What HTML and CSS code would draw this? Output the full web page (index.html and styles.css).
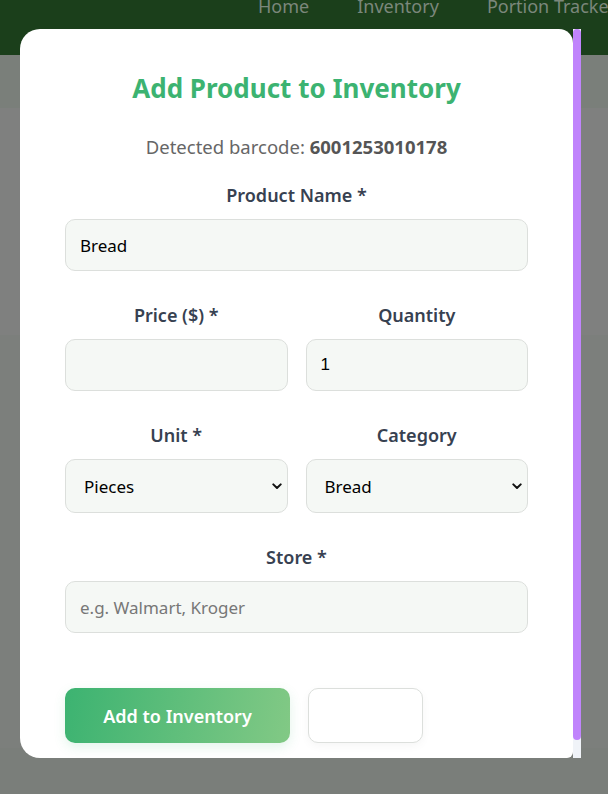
FILE: index.html
```html
<!DOCTYPE html>
<html lang="en">
<head>
<meta charset="utf-8">
<title>Add Product</title>
<link rel="stylesheet" href="styles.css">
</head>
<body>
<div class="page">
  <nav class="nav">
    <ul class="nav-links">
      <li>Home</li>
      <li>Inventory</li>
      <li>Portion Tracker</li>
      <li>Recipes</li>
    </ul>
  </nav>
  <div class="band band-sub"></div>
  <div class="band band-a"></div>
  <div class="band band-b"></div>
  <div class="band band-foot"></div>
</div>

<div class="modal">
  <div class="modal-panel">
    <div class="modal-body">
      <h2 class="modal-title">Add Product to Inventory</h2>
      <p class="barcode">Detected barcode: <strong>6001253010178</strong></p>
      <form class="form">
        <div class="group">
          <label class="label">Product Name *</label>
          <input class="field" type="text" value="Bread">
        </div>
        <div class="row">
          <div class="group">
            <label class="label">Price ($) *</label>
            <input class="field" type="text" value="">
          </div>
          <div class="group">
            <label class="label">Quantity</label>
            <input class="field field-num" type="text" value="1">
          </div>
        </div>
        <div class="row">
          <div class="group">
            <label class="label">Unit *</label>
            <div class="select-wrap">
              <select class="field select"><option>Pieces</option></select>
              <svg class="chev" width="10" height="7" viewBox="0 0 10 7"><path d="M1.3 1.4 L5 5 L8.7 1.4" fill="none" stroke="#111" stroke-width="2" stroke-linecap="round" stroke-linejoin="round"/></svg>
            </div>
          </div>
          <div class="group">
            <label class="label">Category</label>
            <div class="select-wrap">
              <select class="field select"><option>Bread</option></select>
              <svg class="chev" width="10" height="7" viewBox="0 0 10 7"><path d="M1.3 1.4 L5 5 L8.7 1.4" fill="none" stroke="#111" stroke-width="2" stroke-linecap="round" stroke-linejoin="round"/></svg>
            </div>
          </div>
        </div>
        <div class="group">
          <label class="label">Store *</label>
          <input class="field" type="text" placeholder="e.g. Walmart, Kroger">
        </div>
        <div class="actions">
          <button type="button" class="btn btn-primary">Add to Inventory</button>
          <button type="button" class="btn btn-secondary">Cancel</button>
        </div>
      </form>
    </div>
  </div>
  <div class="scrollbar">
    <div class="scroll-thumb"></div>
  </div>
</div>
</body>
</html>
```

FILE: styles.css
```css
* { box-sizing: border-box; }
html, body { margin: 0; padding: 0; }
body {
  width: 608px;
  height: 794px;
  overflow: hidden;
  font-family: "Noto Sans", "Open Sans", sans-serif;
}
.page { display: flex; flex-direction: column; height: 794px; }
.nav {
  height: 55px;
  background: #1b3f1b;
  overflow: hidden;
}
.nav-links {
  list-style: none;
  margin: -6px 0 0 0;
  padding: 0 0 0 258px;
  display: flex;
  gap: 48px;
  white-space: nowrap;
  font-size: 18px;
  line-height: 24px;
  color: #7b877b;
}
.band { flex: none; }
.band-sub { height: 53px; background: #7a7f7a; }
.band-a { height: 227px; background: #7f807f; }
.band-b { height: 413px; background: #7c7f7c; }
.band-foot { flex: 1; background: #7a7e7a; }

.modal {
  position: absolute;
  top: 29px;
  left: 20px;
  width: 561px;
  height: 729px;
  display: flex;
}
.modal-panel {
  flex: 1;
  background: #fff;
  border-radius: 20px 14px 6px 20px;
  overflow: hidden;
}
.scrollbar {
  width: 8px;
  flex: none;
  background: #f0f3f8;
  display: flex;
  flex-direction: column;
}
.scroll-thumb {
  height: 711px;
  background: #c084fc;
  border-radius: 4px;
}

.modal-body {
  padding: 42px 45px 33px 45px;
  text-align: center;
}
.modal-title {
  margin: 0;
  font-size: 26px;
  line-height: 34px;
  font-weight: 700;
  color: #3cb371;
}
.barcode {
  margin: 30px 0 0 0;
  font-size: 18.5px;
  line-height: 24px;
  color: #666;
}
.barcode strong { color: #555; font-weight: 700; }

.form { display: flex; flex-direction: column; gap: 32px; margin-top: 24px; }
.row { display: grid; grid-template-columns: 1fr 1fr; gap: 18px; }
.group { display: flex; flex-direction: column; gap: 12px; }
.label {
  font-size: 18px;
  line-height: 24px;
  font-weight: 600;
  color: #374151;
}
.field {
  width: 100%;
  height: 52px;
  border: 1px solid #dcdfdc;
  border-radius: 10px;
  background: #f5f8f5;
  padding: 0 14px;
  font-family: "Noto Sans", "Open Sans", sans-serif;
  font-size: 17px;
  color: #000;
  text-align: left;
  outline: none;
}
.field-num { font-family: "Liberation Sans", Arial, sans-serif; }
.field::placeholder { color: #777; }
.select-wrap { position: relative; }
.select {
  height: 54px;
  padding-left: 18px;
  -webkit-appearance: none;
  appearance: none;
}
.chev { position: absolute; right: 6px; top: 24px; pointer-events: none; }

.actions { display: flex; gap: 18px; margin-top: 23px; }
.btn {
  height: 55px;
  border-radius: 10px;
  font-family: "Noto Sans", "Open Sans", sans-serif;
  font-size: 18px;
  font-weight: 600;
}
.btn-primary {
  width: 225px;
  border: none;
  color: #fff;
  background: linear-gradient(100deg, #3cb371 0%, #82c985 100%);
  box-shadow: 0 4px 12px rgba(60, 179, 113, 0.15);
}
.btn-secondary {
  width: 115px;
  border: 1px solid #dcdfdc;
  background: #fff;
  color: #fff;
  box-shadow: 0 3px 10px rgba(0, 0, 0, 0.04);
}
```
